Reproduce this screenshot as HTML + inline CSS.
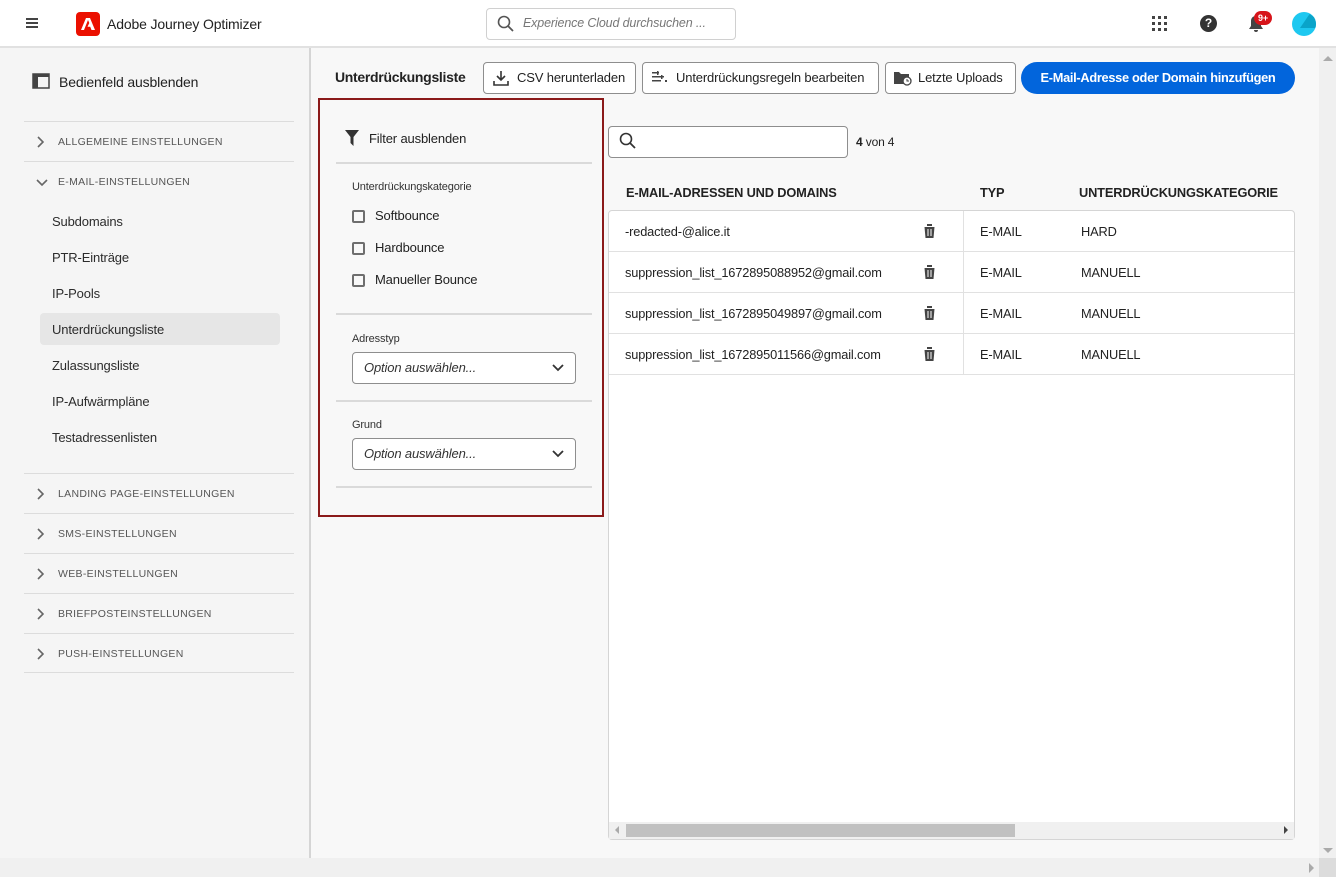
<!DOCTYPE html>
<html><head><meta charset="utf-8"><style>
*{box-sizing:border-box;margin:0;padding:0}
body{width:1336px;height:877px;overflow:hidden;background:#f8f8f8;font-family:"Liberation Sans",sans-serif;color:#222;position:relative;font-size:13px;letter-spacing:-0.15px}
.a{position:absolute}
.hdr{left:0;top:0;width:1336px;height:48px;background:#fff;border-bottom:2px solid #e1e1e1}
.side{left:0;top:48px;width:311px;height:810px;background:#f5f5f5;border-right:2px solid #d5d5d5}
.sec{left:24px;width:270px;height:40px;border-top:1px solid #dcdcdc;font-size:10.5px;letter-spacing:.3px;color:#555;line-height:40px;padding-left:34px}
.sec svg{position:absolute;left:12px;top:14px}
.it{left:52px;font-size:13px;color:#2c2c2c}
.btn{top:62px;height:32px;border:1px solid #8e8e8e;border-radius:4px;background:#fff;font-size:13px;line-height:30px;color:#222;white-space:nowrap}
.row{left:609px;width:685px;height:41px;border-bottom:1px solid #e1e1e1;font-size:12.8px}
.row span{position:absolute;top:13px}
.cb{width:13px;height:13px;border:2px solid #6e6e6e;border-radius:2px;left:352px}
.lbl{left:375px;font-size:13px}
.sel{left:352px;width:224px;height:32px;border:1px solid #8e8e8e;border-radius:4px;background:#fff;font-style:italic;font-size:13px;line-height:30px;padding-left:11px;color:#333}
.hl{left:336px;width:256px;height:2px;background:#dadada}
</style></head><body>
<div class="a hdr"></div>
<svg class="a" style="left:26px;top:18px" width="12" height="10"><rect y="0" width="12" height="2" fill="#444"/><rect y="4" width="12" height="2" fill="#444"/><rect y="8" width="12" height="2" fill="#444"/></svg>
<div class="a" style="left:76px;top:12px;width:24px;height:24px;background:#eb1000;border-radius:4px"></div>
<svg class="a" style="left:80px;top:16px" width="16" height="16"><path d="M6 2h4l5 12h-3.5l-1.3-3.3H7.5L9.3 7 8 4 4 14H1z" fill="#fff"/></svg>
<div class="a" style="left:107px;top:16px;font-size:14px">Adobe Journey Optimizer</div>
<div class="a" style="left:486px;top:8px;width:250px;height:32px;border:1px solid #d0d0d0;border-radius:4px;background:#fff"></div>
<svg class="a" style="left:497px;top:15px" width="18" height="18"><circle cx="7" cy="7" r="5.5" stroke="#555" stroke-width="1.6" fill="none"/><path d="M11 11l5 5" stroke="#555" stroke-width="1.8"/></svg>
<div class="a" style="left:523px;top:16px;font-style:italic;color:#777;font-size:12.5px">Experience Cloud durchsuchen ...</div>
<svg class="a" style="left:1152px;top:16px" width="16" height="16" fill="#444"><rect x="0" y="0" width="3" height="3"/><rect x="6" y="0" width="3" height="3"/><rect x="12" y="0" width="3" height="3"/><rect x="0" y="6" width="3" height="3"/><rect x="6" y="6" width="3" height="3"/><rect x="12" y="6" width="3" height="3"/><rect x="0" y="12" width="3" height="3"/><rect x="6" y="12" width="3" height="3"/><rect x="12" y="12" width="3" height="3"/></svg>
<div class="a" style="left:1200px;top:15px;width:17px;height:17px;border-radius:50%;background:#333;color:#fff;font-weight:bold;font-size:12px;text-align:center;line-height:17px">?</div>
<svg class="a" style="left:1248px;top:15px" width="16" height="18"><path d="M8 1c-3 0-5 2-5 5v5l-2 3h14l-2-3V6c0-3-2-5-5-5z M6 15h4a2 2 0 0 1-4 0z" fill="#444"/></svg>
<div class="a" style="left:1254px;top:11px;width:18px;height:14px;border-radius:7px;background:#d7141a;color:#fff;font-size:9px;font-weight:bold;text-align:center;line-height:14px">9+</div>
<div class="a" style="left:1292px;top:12px;width:24px;height:24px;border-radius:50%;background:#1ec8f0;overflow:hidden"><div style="position:absolute;left:8px;top:2px;width:16px;height:14px;background:#0aa4c9;clip-path:polygon(60% 0,100% 30%,100% 100%,0 100%)"></div></div>

<div class="a side"></div>
<svg class="a" style="left:32px;top:73px" width="18" height="16"><rect x="1" y="1" width="16" height="14" fill="none" stroke="#444" stroke-width="1.5"/><rect x="1" y="1" width="5" height="14" fill="#444"/><rect x="1" y="1" width="16" height="3" fill="#444"/></svg>
<div class="a" style="left:59px;top:74px;font-size:14px">Bedienfeld ausblenden</div>
<div class="a sec" style="top:121px"><svg width="8" height="12"><path d="M2 1l5 5-5 5" stroke="#666" stroke-width="1.6" fill="none"/></svg>ALLGEMEINE EINSTELLUNGEN</div>
<div class="a sec" style="top:161px"><svg width="12" height="10" style="left:12px;top:16px"><path d="M1 2l5 5 5-5" stroke="#666" stroke-width="1.6" fill="none"/></svg>E-MAIL-EINSTELLUNGEN</div>
<div class="a it" style="top:214px">Subdomains</div>
<div class="a it" style="top:250px">PTR-Einträge</div>
<div class="a it" style="top:286px">IP-Pools</div>
<div class="a" style="left:40px;top:313px;width:240px;height:32px;background:#e6e6e6;border-radius:4px"></div>
<div class="a it" style="top:322px">Unterdrückungsliste</div>
<div class="a it" style="top:358px">Zulassungsliste</div>
<div class="a it" style="top:394px">IP-Aufwärmpläne</div>
<div class="a it" style="top:430px">Testadressenlisten</div>
<div class="a sec" style="top:473px"><svg width="8" height="12"><path d="M2 1l5 5-5 5" stroke="#666" stroke-width="1.6" fill="none"/></svg>LANDING PAGE-EINSTELLUNGEN</div>
<div class="a sec" style="top:513px"><svg width="8" height="12"><path d="M2 1l5 5-5 5" stroke="#666" stroke-width="1.6" fill="none"/></svg>SMS-EINSTELLUNGEN</div>
<div class="a sec" style="top:553px"><svg width="8" height="12"><path d="M2 1l5 5-5 5" stroke="#666" stroke-width="1.6" fill="none"/></svg>WEB-EINSTELLUNGEN</div>
<div class="a sec" style="top:593px"><svg width="8" height="12"><path d="M2 1l5 5-5 5" stroke="#666" stroke-width="1.6" fill="none"/></svg>BRIEFPOSTEINSTELLUNGEN</div>
<div class="a sec" style="top:633px;border-bottom:1px solid #dcdcdc"><svg width="8" height="12"><path d="M2 1l5 5-5 5" stroke="#666" stroke-width="1.6" fill="none"/></svg>PUSH-EINSTELLUNGEN</div>

<div class="a" style="left:335px;top:69px;font-size:14px;font-weight:bold;letter-spacing:-0.3px">Unterdrückungsliste</div>
<div class="a btn" style="left:483px;width:153px;padding-left:33px">CSV herunterladen</div>
<svg class="a" style="left:493px;top:70px" width="16" height="16"><path d="M8 1v9M4 6l4 4 4-4M1 11v4h14v-4" stroke="#333" stroke-width="1.6" fill="none"/></svg>
<div class="a btn" style="left:642px;width:237px;padding-left:33px">Unterdrückungsregeln bearbeiten</div>
<svg class="a" style="left:652px;top:71px" width="16" height="14" fill="#444"><rect x="0" y="1" width="7" height="1.5"/><rect x="0" y="5" width="12" height="1.5"/><rect x="0" y="9" width="9" height="1.5"/><rect x="5" y="0" width="1.5" height="4"/><rect x="9" y="4" width="1.5" height="4"/><rect x="13" y="9" width="2" height="2"/></svg>
<div class="a btn" style="left:885px;width:131px;padding-left:32px">Letzte Uploads</div>
<svg class="a" style="left:893px;top:69px" width="19" height="17"><path d="M1 3h5l2 2h8v4H1z" fill="#444"/><rect x="1" y="7" width="10" height="8" fill="#444"/><circle cx="14" cy="12" r="4" fill="#fff" stroke="#444" stroke-width="1.3"/><path d="M14 10v2h2" stroke="#444" fill="none"/></svg>
<div class="a" style="left:1021px;top:62px;width:274px;height:32px;background:#0265dc;border-radius:16px;color:#fff;font-weight:bold;font-size:12.8px;letter-spacing:-0.3px;text-align:center;line-height:32px">E-Mail-Adresse oder Domain hinzufügen</div>

<div class="a" style="left:318px;top:98px;width:286px;height:419px;border:2px solid #8b1a1a"></div>
<svg class="a" style="left:345px;top:130px" width="14" height="16"><path d="M0 0h14L8.5 7v9L5.5 13V7z" fill="#333"/></svg>
<div class="a" style="left:369px;top:131px;font-size:13px">Filter ausblenden</div>
<div class="a hl" style="top:162px"></div>
<div class="a" style="left:352px;top:181px;font-size:11px;color:#333">Unterdrückungskategorie</div>
<div class="a cb" style="top:210px"></div><div class="a lbl" style="top:208px">Softbounce</div>
<div class="a cb" style="top:242px"></div><div class="a lbl" style="top:240px">Hardbounce</div>
<div class="a cb" style="top:274px"></div><div class="a lbl" style="top:272px">Manueller Bounce</div>
<div class="a hl" style="top:313px"></div>
<div class="a" style="left:352px;top:333px;font-size:11px;color:#333">Adresstyp</div>
<div class="a sel" style="top:352px">Option auswählen...</div>
<svg class="a" style="left:552px;top:363px" width="12" height="9"><path d="M1 2l5 5 5-5" stroke="#333" stroke-width="1.8" fill="none"/></svg>
<div class="a hl" style="top:400px"></div>
<div class="a" style="left:352px;top:419px;font-size:11px;color:#333">Grund</div>
<div class="a sel" style="top:438px">Option auswählen...</div>
<svg class="a" style="left:552px;top:449px" width="12" height="9"><path d="M1 2l5 5 5-5" stroke="#333" stroke-width="1.8" fill="none"/></svg>
<div class="a hl" style="top:486px"></div>

<div class="a" style="left:608px;top:126px;width:240px;height:32px;border:1px solid #8e8e8e;border-radius:4px;background:#fff"></div>
<svg class="a" style="left:619px;top:132px" width="18" height="18"><circle cx="7" cy="7" r="5.5" stroke="#333" stroke-width="1.6" fill="none"/><path d="M11 11l5 5" stroke="#333" stroke-width="1.8"/></svg>
<div class="a" style="left:856px;top:135px;font-size:12px"><b>4</b> von 4</div>
<div class="a" style="left:626px;top:185px;font-weight:bold;font-size:12.8px">E-MAIL-ADRESSEN UND DOMAINS</div>
<div class="a" style="left:980px;top:185px;font-weight:bold;font-size:12.8px">TYP</div>
<div class="a" style="left:1079px;top:185px;font-weight:bold;font-size:12.8px">UNTERDRÜCKUNGSKATEGORIE</div>
<div class="a" style="left:608px;top:210px;width:687px;height:630px;background:#fff;border:1px solid #d5d5d5;border-radius:4px"></div>
<div class="a" style="left:963px;top:211px;width:1px;height:164px;background:#e1e1e1"></div>
<div class="a row" style="top:211px"><span style="left:16px">-redacted-@alice.it</span><span style="left:371px">E-MAIL</span><span style="left:472px">HARD</span></div>
<div class="a row" style="top:252px"><span style="left:16px">suppression_list_1672895088952@gmail.com</span><span style="left:371px">E-MAIL</span><span style="left:472px">MANUELL</span></div>
<div class="a row" style="top:293px"><span style="left:16px">suppression_list_1672895049897@gmail.com</span><span style="left:371px">E-MAIL</span><span style="left:472px">MANUELL</span></div>
<div class="a row" style="top:334px"><span style="left:16px">suppression_list_1672895011566@gmail.com</span><span style="left:371px">E-MAIL</span><span style="left:472px">MANUELL</span></div>
<svg class="a" style="left:922px;top:223px" width="15" height="16"><path d="M1 3h13M5 3V1h5v2M2.5 4h10l-1 11h-8z" fill="#444"/><path d="M6 6v7M9 6v7" stroke="#fff" stroke-width="1"/></svg>
<svg class="a" style="left:922px;top:264px" width="15" height="16"><path d="M1 3h13M5 3V1h5v2M2.5 4h10l-1 11h-8z" fill="#444"/><path d="M6 6v7M9 6v7" stroke="#fff" stroke-width="1"/></svg>
<svg class="a" style="left:922px;top:305px" width="15" height="16"><path d="M1 3h13M5 3V1h5v2M2.5 4h10l-1 11h-8z" fill="#444"/><path d="M6 6v7M9 6v7" stroke="#fff" stroke-width="1"/></svg>
<svg class="a" style="left:922px;top:346px" width="15" height="16"><path d="M1 3h13M5 3V1h5v2M2.5 4h10l-1 11h-8z" fill="#444"/><path d="M6 6v7M9 6v7" stroke="#fff" stroke-width="1"/></svg>
<div class="a" style="left:609px;top:822px;width:685px;height:17px;background:#f0f0f0"></div>
<div class="a" style="left:626px;top:824px;width:389px;height:13px;background:#c1c1c1"></div>
<div class="a" style="left:1284px;top:826px;width:0;height:0;border-left:4px solid #444;border-top:4px solid transparent;border-bottom:4px solid transparent"></div>
<div class="a" style="left:615px;top:826px;width:0;height:0;border-right:4px solid #aaa;border-top:4px solid transparent;border-bottom:4px solid transparent"></div>

<div class="a" style="left:1319px;top:48px;width:17px;height:810px;background:#f0f0f0"></div>
<div class="a" style="left:1323px;top:56px;border-bottom:5px solid #aaa;border-left:5px solid transparent;border-right:5px solid transparent"></div>
<div class="a" style="left:1323px;top:848px;border-top:5px solid #aaa;border-left:5px solid transparent;border-right:5px solid transparent"></div>
<div class="a" style="left:0;top:858px;width:1319px;height:19px;background:#f0f0f0"></div>
<div class="a" style="left:1309px;top:863px;border-left:5px solid #aaa;border-top:5px solid transparent;border-bottom:5px solid transparent"></div>
<div class="a" style="left:1319px;top:858px;width:17px;height:19px;background:#dcdcdc"></div>
</body></html>
